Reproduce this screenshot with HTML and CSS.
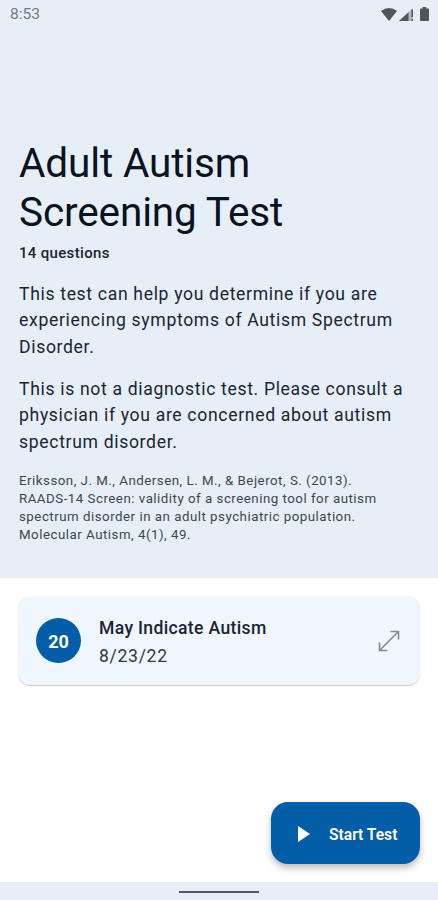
FILE: index.html
```html
<!DOCTYPE html>
<html lang="en"><head><meta charset="utf-8"><title>Adult Autism Screening Test</title><link rel="stylesheet" href="styles.css"></head>
<body>
<main class="screen">
<header class="status"><span>8:53</span>
<div class="status-icons">
<svg class="wifi" viewBox="0 0 16 13"><path d="M0 3Q8-3 16 3L8 13Z"/></svg>
<svg class="signal" viewBox="0 0 14 13"><path class="faint" d="M14 0V13H0Z"/><path d="M9.5 4.2V13H0Z"/><path d="M12.5 1.5H14V9h-1.5zM12.5 11H14v2h-1.5z"/></svg>
<svg class="battery" viewBox="0 0 9 14"><path d="M2.7 0h3.6v1.5H8.2Q9 1.5 9 2.3V13.2Q9 14 8.2 14H.8Q0 14 0 13.2V2.3Q0 1.5.8 1.5h1.9z"/></svg>
</div></header>
<section class="intro">
<h1>Adult Autism<br>Screening Test</h1>
<p class="count">14 questions</p>
<p class="copy">This test can help you determine if you are<br>experiencing symptoms of Autism Spectrum<br>Disorder.</p>
<p class="copy">This is not a diagnostic test. Please consult a<br>physician if you are concerned about autism<br>spectrum disorder.</p>
<p class="citation">Eriksson, J. M., Andersen, L. M., &amp; Bejerot, S. (2013).<br>RAADS-14 Screen: validity of a screening tool for autism<br>spectrum disorder in an adult psychiatric population.<br>Molecular Autism, 4(1), 49.</p>
</section>
<section class="results">
<article class="card"><span class="score">20</span><div class="result"><h2>May Indicate Autism</h2><time>8/23/22</time></div>
<svg class="expand" viewBox="0 0 22 22"><path d="M1.5 20.5L20.5 1.5M12.5 1.5H20.5V9.5M1.5 12.5V20.5H9.5"/></svg></article>
<button class="start"><svg viewBox="0 0 12 16"><path d="M0 0L12 8L0 16Z"/></svg><span>Start Test</span></button>
</section>
<footer class="nav"><span class="handle"></span></footer>
</main></body></html>
```
FILE: styles.css
```css
*{box-sizing:border-box}
body{margin:0;font-family:Roboto,sans-serif;color:#1b2432}
h1,h2,p{margin:0;font-weight:400}
.screen{width:438px;height:900px;display:flex;flex-direction:column;background:#fff;overflow:hidden}
.status{height:30px;flex:none;padding:0 9px 2px 10px;display:flex;align-items:center;justify-content:space-between;background:#e6eff7;color:#737a82;font-size:15.5px}
.status-icons{display:flex;align-items:center;gap:2px;fill:#50555b}
.wifi{width:16px;height:13px}
.signal{width:14px;height:13px}
.battery{width:9px;height:14px;margin-left:5px}
.faint{opacity:.35}
.intro{height:548px;flex:none;padding:109px 19px 0;background:#e6eff7;white-space:nowrap}
h1{font-size:40.5px;line-height:49px;letter-spacing:-.13px;color:#0b1220}
.count{font-size:15px;line-height:20px;font-weight:500;letter-spacing:.33px;margin-top:6px}
.copy{font-size:17.6px;line-height:26.7px;letter-spacing:.66px;margin-top:17.5px}
.copy+.copy{margin-top:15px}
.citation{font-size:13.3px;line-height:18px;letter-spacing:.5px;margin-top:16.5px;color:#3d4650}
.results{flex:1;padding:18px;display:flex;flex-direction:column;justify-content:space-between}
.card{height:89px;border-radius:12px;background:#f0f6fd;box-shadow:0 1px 1px #0003;display:flex;align-items:center;padding:0 20px 0 18px}
.score{width:45px;height:45px;border-radius:50%;background:#045da7;color:#fff;display:grid;place-items:center;font-size:18px;font-weight:700;padding-top:1px}
.result{margin-left:18px;flex:1;padding-top:2px}
.result h2{font-size:17.6px;line-height:28px;font-weight:500;letter-spacing:.33px}
.result time{display:block;font-size:17.6px;line-height:28px;letter-spacing:.68px;color:#303946}
.expand{width:22px;height:22px;fill:none;stroke:#858b8e;stroke-width:1.6}
.start{align-self:flex-end;width:149px;height:62px;border:0;border-radius:17px;background:#045da7;color:#fff;font:600 15.6px Roboto,sans-serif;display:flex;align-items:center;padding:1px 0 0 27px;gap:19px;box-shadow:0 4px 7px #0004}
.start svg{width:12px;height:16px;fill:#fff}
.start span{padding-top:2px}
.nav{height:18px;flex:none;background:#e6eff7;display:flex;justify-content:center;padding-top:9px}
.handle{width:80px;height:2px;background:#555b65}
```
